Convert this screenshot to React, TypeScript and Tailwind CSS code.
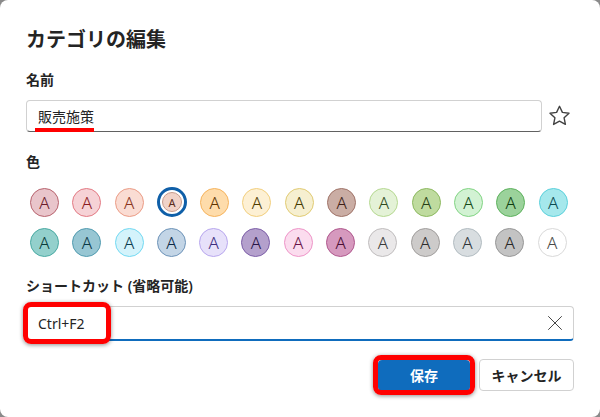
import { X } from 'lucide-react';

type Swatch = { bg: string; border: string; text: string };

// fill / ring / letter colour per category swatch
const ROW1: Swatch[] = [
  { bg: '#e9c5cb', border: '#b8646f', text: '#6b1d2c' },
  { bg: '#f6d2d6', border: '#e37a84', text: '#8b1a22' },
  { bg: '#fadcd3', border: '#eb9c86', text: '#8a3420' },
  { bg: '#f1d3c8', border: '#c79c8c', text: '#5a2c1c' },
  { bg: '#fedcab', border: '#f6b45e', text: '#5e3400' },
  { bg: '#fdf0d4', border: '#f2cf7e', text: '#4f3a00' },
  { bg: '#f6efd0', border: '#e1cb73', text: '#443a00' },
  { bg: '#caada4', border: '#a07469', text: '#3d1f17' },
  { bg: '#e4f2d7', border: '#b6d992', text: '#2f4a20' },
  { bg: '#bfdb9f', border: '#8db960', text: '#273f16' },
  { bg: '#d2f2d3', border: '#82d484', text: '#164a17' },
  { bg: '#9bd29b', border: '#5eb25e', text: '#0f3d10' },
  { bg: '#a5e8ec', border: '#5cd1dc', text: '#0b4a50' },
];

const ROW2: Swatch[] = [
  { bg: '#93d0cc', border: '#4aaaa3', text: '#0b3d3a' },
  { bg: '#97c6d3', border: '#519bb0', text: '#0b3846' },
  { bg: '#d4f3fb', border: '#72d9f2', text: '#0b3c4e' },
  { bg: '#c3d5e6', border: '#6d93b8', text: '#0b2946' },
  { bg: '#e7e1fa', border: '#b8a7ee', text: '#3d2f80' },
  { bg: '#b4a0cc', border: '#7d5fa8', text: '#2a1648' },
  { bg: '#fbdcee', border: '#ee95c8', text: '#6a1448' },
  { bg: '#d699be', border: '#b0588e', text: '#4a0f34' },
  { bg: '#eae8e9', border: '#c0bdbe', text: '#3a3a3a' },
  { bg: '#cdcbca', border: '#a19e9d', text: '#2d2d2d' },
  { bg: '#d8dde0', border: '#b2bcc1', text: '#2d3438' },
  { bg: '#c3c3c3', border: '#979797', text: '#262626' },
  { bg: '#ffffff', border: '#d9d9d9', text: '#4a4a4a' },
];

const FONT = 'font-["Noto_Sans","Noto_Sans_CJK_JP",sans-serif]';

function Circle({ s, selected }: { s: Swatch; selected?: boolean }) {
  if (selected) {
    return (
      <div className="w-[30px] h-[30px] rounded-full border-[3px] border-[#0f5fa8] flex items-center justify-center bg-white">
        <div
          className="w-[20px] h-[20px] rounded-full border flex items-center justify-center text-[11px] leading-none"
          style={{ background: s.bg, borderColor: s.border, color: s.text }}
        >
          A
        </div>
      </div>
    );
  }
  return (
    <div
      className="w-[29px] h-[29px] rounded-full border flex items-center justify-center text-[17px] leading-none font-light"
      style={{ background: s.bg, borderColor: s.border, color: s.text }}
    >
      A
    </div>
  );
}

function Star() {
  return (
    <svg width="25" height="24" viewBox="0 0 24 24" fill="none" stroke="#424242" strokeWidth="1.4" strokeLinejoin="round">
      <path d="M12 2.3l2.9 6.1 6.6.8-4.9 4.6 1.3 6.6L12 17.1l-5.9 3.3 1.3-6.6-4.9-4.6 6.6-.8z" />
    </svg>
  );
}

export default function App() {
  return (
    <div className={`w-[600px] h-[417px] bg-[#8a8a8a] ${FONT}`}>
      <div className="w-full h-full bg-white rounded-[8px] px-[26px] pt-[26px] text-[#242424]">
        <h2 className="text-[20px] leading-[28px] font-bold">カテゴリの編集</h2>

        <div className="mt-[16px] text-[14px] leading-[20px] font-semibold">名前</div>
        <div className="mt-[10px] flex items-center gap-[5px]">
          <div className="relative w-[516px] h-[32px] border border-[#d1d1d1] border-b-[#616161] rounded-[4px] flex items-center pl-[11px] text-[14px]">
            販売施策
            <div className="absolute left-[8px] bottom-[-1px] w-[59px] h-[4px] bg-[#ff0000]" />
          </div>
          <Star />
        </div>

        <div className="mt-[20px] text-[14px] leading-[20px] font-semibold">色</div>
        <div className="mt-[15px] pl-[4px] flex flex-col gap-[11px]">
          <div className="flex items-center gap-[13.3px]">
            {ROW1.map((s, i) => (
              <Circle key={i} s={s} selected={i === 3} />
            ))}
          </div>
          <div className="flex items-center gap-[13.3px]">
            {ROW2.map((s, i) => (
              <Circle key={i} s={s} />
            ))}
          </div>
        </div>

        <div className="mt-[19px] text-[14px] leading-[20px] font-semibold">ショートカット (省略可能)</div>
        <div className="relative mt-[10px] w-[548px] h-[35px] border border-[#d1d1d1] border-b-2 border-b-[#0f6cbd] rounded-[4px] flex items-center justify-between pl-[11px] pr-[5px] text-[14px]">
          <span>Ctrl+F2</span>
          <X size={26} strokeWidth={0.9} color="#424242" />
          <div className="absolute left-[-4px] top-[-5px] w-[88px] h-[42px] border-[5px] border-[#ff0000] rounded-[8px] shadow-[0_1px_4px_rgba(0,0,0,0.45)]" />
        </div>

        <div className="mt-[18px] flex justify-end gap-[9px]">
          <div className="relative">
            <button className="w-[92px] h-[31px] mt-[1px] rounded-[4px] bg-[#0f6cbd] text-white text-[14px] font-bold">
              保存
            </button>
            <div className="absolute left-[-5px] top-[-4px] w-[102px] h-[40px] border-[5px] border-[#ff0000] rounded-[8px] shadow-[0_1px_4px_rgba(0,0,0,0.45)]" />
          </div>
          <button className="w-[95px] h-[32px] rounded-[4px] border border-[#d1d1d1] bg-white text-[14px] font-bold text-[#242424]">
            キャンセル
          </button>
        </div>
      </div>
    </div>
  );
}
